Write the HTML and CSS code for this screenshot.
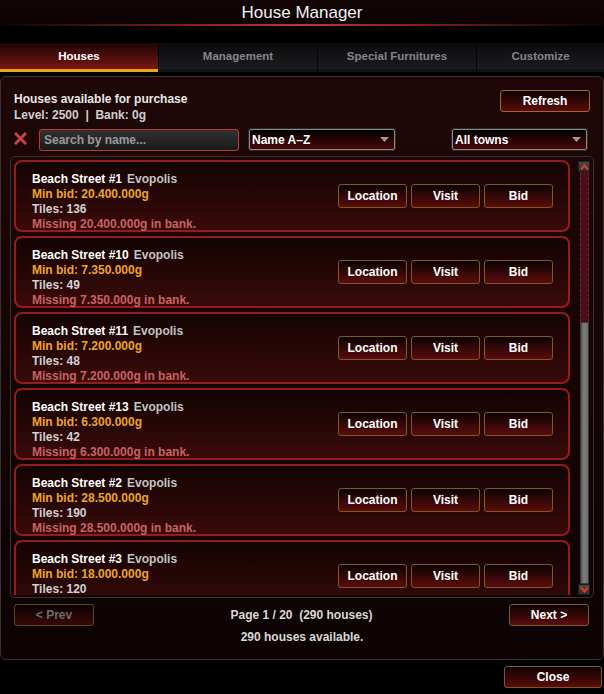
FILE: index.html
```html
<!DOCTYPE html>
<html>
<head>
<meta charset="utf-8">
<title>House Manager</title>
<link rel="stylesheet" href="styles.css">
</head>
<body>
<div class="window">
  <header class="titlebar"><h1 class="title">House Manager</h1></header>
  <nav class="tabs">
    <div class="tab active">Houses</div>
    <div class="tab">Management</div>
    <div class="tab">Special Furnitures</div>
    <div class="tab">Customize</div>
  </nav>
  <section class="panel">
    <div class="panel-head">
      <div class="info">
        <div class="info-title">Houses available for purchase</div>
        <div class="info-sub">Level: 2500 &nbsp;|&nbsp; Bank: 0g</div>
      </div>
      <button class="btn refresh">Refresh</button>
    </div>
    <div class="filters">
      <svg class="clear" width="13" height="13" viewBox="0 0 13 13"><path d="M2 2 L11 11 M11 2 L2 11" stroke="#c84444" stroke-width="3" stroke-linecap="square"/></svg>
      <div class="search">Search by name...</div>
      <div class="select sort"><span>Name A–Z</span><svg width="9" height="5" viewBox="0 0 9 5"><path d="M0 0 H9 L4.5 5 Z" fill="#9a9a9a"/></svg></div>
      <div class="select towns"><span>All towns</span><svg width="9" height="5" viewBox="0 0 9 5"><path d="M0 0 H9 L4.5 5 Z" fill="#9a9a9a"/></svg></div>
    </div>
    <div class="list">
      <div class="cards">
        <div class="card">
          <div class="card-text">
            <div class="name">Beach Street #1<span class="town">Evopolis</span></div>
            <div class="bid">Min bid: 20.400.000g</div>
            <div class="tiles">Tiles: 136</div>
            <div class="missing">Missing 20.400.000g in bank.</div>
          </div>
          <div class="actions"><button class="btn act">Location</button><button class="btn act">Visit</button><button class="btn act">Bid</button></div>
        </div>
        <div class="card">
          <div class="card-text">
            <div class="name">Beach Street #10<span class="town">Evopolis</span></div>
            <div class="bid">Min bid: 7.350.000g</div>
            <div class="tiles">Tiles: 49</div>
            <div class="missing">Missing 7.350.000g in bank.</div>
          </div>
          <div class="actions"><button class="btn act">Location</button><button class="btn act">Visit</button><button class="btn act">Bid</button></div>
        </div>
        <div class="card">
          <div class="card-text">
            <div class="name">Beach Street #11<span class="town">Evopolis</span></div>
            <div class="bid">Min bid: 7.200.000g</div>
            <div class="tiles">Tiles: 48</div>
            <div class="missing">Missing 7.200.000g in bank.</div>
          </div>
          <div class="actions"><button class="btn act">Location</button><button class="btn act">Visit</button><button class="btn act">Bid</button></div>
        </div>
        <div class="card">
          <div class="card-text">
            <div class="name">Beach Street #13<span class="town">Evopolis</span></div>
            <div class="bid">Min bid: 6.300.000g</div>
            <div class="tiles">Tiles: 42</div>
            <div class="missing">Missing 6.300.000g in bank.</div>
          </div>
          <div class="actions"><button class="btn act">Location</button><button class="btn act">Visit</button><button class="btn act">Bid</button></div>
        </div>
        <div class="card">
          <div class="card-text">
            <div class="name">Beach Street #2<span class="town">Evopolis</span></div>
            <div class="bid">Min bid: 28.500.000g</div>
            <div class="tiles">Tiles: 190</div>
            <div class="missing">Missing 28.500.000g in bank.</div>
          </div>
          <div class="actions"><button class="btn act">Location</button><button class="btn act">Visit</button><button class="btn act">Bid</button></div>
        </div>
        <div class="card">
          <div class="card-text">
            <div class="name">Beach Street #3<span class="town">Evopolis</span></div>
            <div class="bid">Min bid: 18.000.000g</div>
            <div class="tiles">Tiles: 120</div>
          </div>
          <div class="actions"><button class="btn act">Location</button><button class="btn act">Visit</button><button class="btn act">Bid</button></div>
        </div>
      </div>
      <div class="scrollbar">
        <div class="sb-btn"><svg width="9" height="6" viewBox="0 0 9 6"><path d="M1 5.5 L4.5 1.5 L8 5.5" fill="none" stroke="#e03a2a" stroke-width="2"/></svg></div>
        <div class="sb-track"></div>
        <div class="sb-thumb"></div>
        <div class="sb-btn"><svg width="9" height="6" viewBox="0 0 9 6"><path d="M1 0.5 L4.5 4.5 L8 0.5" fill="none" stroke="#e03a2a" stroke-width="2"/></svg></div>
      </div>
    </div>
    <div class="pager">
      <button class="btn page disabled">&lt; Prev</button>
      <div class="page-label">Page 1 / 20 &nbsp;(290 houses)</div>
      <button class="btn page next">Next &gt;</button>
    </div>
    <div class="count">290 houses available.</div>
  </section>
  <div class="footer"><button class="btn close">Close</button></div>
</div>
</body>
</html>
```

FILE: styles.css
```css
* { box-sizing: border-box; margin: 0; padding: 0; }
html, body { width: 604px; height: 694px; background: #000; overflow: hidden; }
body {
  font-family: "Liberation Sans", Arial, sans-serif;
  font-size: 12px;
  font-weight: bold;
  color: #e6e6e6;
}
.window { width: 604px; height: 694px; display: flex; flex-direction: column; }

.titlebar {
  height: 26px;
  display: flex;
  justify-content: center;
  background:
    linear-gradient(90deg, rgba(200,40,40,0) 0%, #c83434 50%, rgba(200,40,40,0) 100%) bottom / 100% 2px no-repeat,
    linear-gradient(#140505, #0a0202);
}
.title {
  font-size: 17px;
  font-weight: normal;
  line-height: 25px;
  color: #f2f2f2;
}

.tabs {
  margin-top: 17px;
  height: 29px;
  display: grid;
  grid-template-columns: 158px 159px 159px 1fr;
}
.tab {
  display: flex;
  align-items: center;
  justify-content: center;
  font-size: 11.5px;
  color: #85858b;
  background: linear-gradient(#0b0b0d, #1c1c20);
  border-left: 1px solid #050505;
  border-bottom: 3px solid #121214;
}
.tab.active {
  color: #ffffff;
  border-left: none;
  background: linear-gradient(#1e0505, #781414);
  border-bottom: 3px solid #e8a41e;
}

.panel {
  margin-top: 4px;
  height: 584px;
  border: 1px solid #3a3232;
  border-radius: 6px;
  background: linear-gradient(#1f0707, #0d0303);
  padding: 14px 13px 0 13px;
}
.panel-head { display: flex; justify-content: space-between; align-items: flex-start; }
.info { line-height: 16px; }
.info-title { color: #e8e8e8; }
.info-sub { color: #cfcfcf; }

.btn {
  font-family: "Liberation Sans", Arial, sans-serif;
  font-weight: bold;
  font-size: 12px;
  color: #ffffff;
  border: 1px solid #7a5a28;
  border-radius: 3px;
  background: linear-gradient(#0c0202, #5c0c0c);
  display: flex;
  align-items: center;
  justify-content: center;
}
.refresh { width: 90px; height: 22px; margin-top: -1px; border-color: #9a6a2e; }

.filters {
  margin-top: 6px;
  height: 21px;
  display: flex;
  align-items: center;
}
.clear { margin-top: -2px; }
.search {
  margin-left: 12px;
  width: 200px;
  height: 22px;
  border: 1px solid #c03838;
  border-radius: 3px;
  background: linear-gradient(#303030, #1a1a1a);
  color: #9a9a9a;
  padding-left: 4px;
  display: flex;
  align-items: center;
}
.select {
  height: 21px;
  border: 1px solid #8a8a8a;
  border-radius: 2px;
  background: linear-gradient(#000000, #4a0808);
  color: #ffffff;
  display: flex;
  align-items: center;
  justify-content: space-between;
  padding: 0 5px 0 2px;
  box-shadow: 0 0 0 1px #2a2a2a;
}
.sort { margin-left: 10px; width: 146px; }
.towns { margin-left: auto; margin-right: 3px; width: 135px; }

.list {
  margin: 6px -4px 0 -4px;
  height: 442px;
  border: 1px solid #3a3232;
  border-radius: 5px;
  display: flex;
  padding: 3px 3px 2px 3px;
  overflow: hidden;
}
.cards { width: 556px; display: flex; flex-direction: column; gap: 4px; overflow: hidden; }
.card {
  flex: none;
  height: 72px;
  border: 2px solid #941c1c;
  border-radius: 8px;
  background: linear-gradient(#130303, #3a0a0a);
  display: flex;
  justify-content: space-between;
  align-items: center;
  padding: 0 15px 0 16px;
}
.card-text { line-height: 15px; align-self: flex-start; padding-top: 10px; }
.name { color: #ffffff; }
.town { color: #c4c4c4; margin-left: 5px; }
.bid { color: #eea424; }
.tiles { color: #d2d2d2; }
.missing { color: #c86262; }
.actions { display: flex; gap: 4px; }
.act { width: 69px; height: 24px; }

.scrollbar {
  margin-left: 8px;
  width: 12px;
  display: flex;
  flex-direction: column;
  align-items: center;
  padding-top: 1px;
}
.sb-btn {
  width: 12px;
  height: 11px;
  background: linear-gradient(#4a4a4a, #2e2e2e);
  border: 1px solid #1a1a1a;
  display: flex;
  align-items: center;
  justify-content: center;
}
.sb-track {
  width: 9px;
  height: 150px;
  background: #4c0c18;
  border-left: 1px dashed #6a2a34;
  border-right: 1px dashed #6a2a34;
}
.sb-thumb {
  width: 9px;
  height: 262px;
  background: linear-gradient(90deg, #505050, #808080 40%, #6a6a6a);
  border: 1px solid #3a3a3a;
}

.pager {
  margin-top: 6px;
  display: flex;
  justify-content: space-between;
  align-items: center;
}
.page { width: 80px; height: 22px; }
.page.next { margin-right: 1px; }
.page.disabled { color: #6c6c6c; border-color: #5a4624; background: linear-gradient(#0a0202, #3a0808); }
.page-label { color: #d8d8d8; }
.count { margin-top: 4px; text-align: center; line-height: 14px; color: #d8d8d8; }

.footer { display: flex; justify-content: flex-end; padding: 6px 2px 0 0; }
.close { width: 98px; height: 22px; }
```
